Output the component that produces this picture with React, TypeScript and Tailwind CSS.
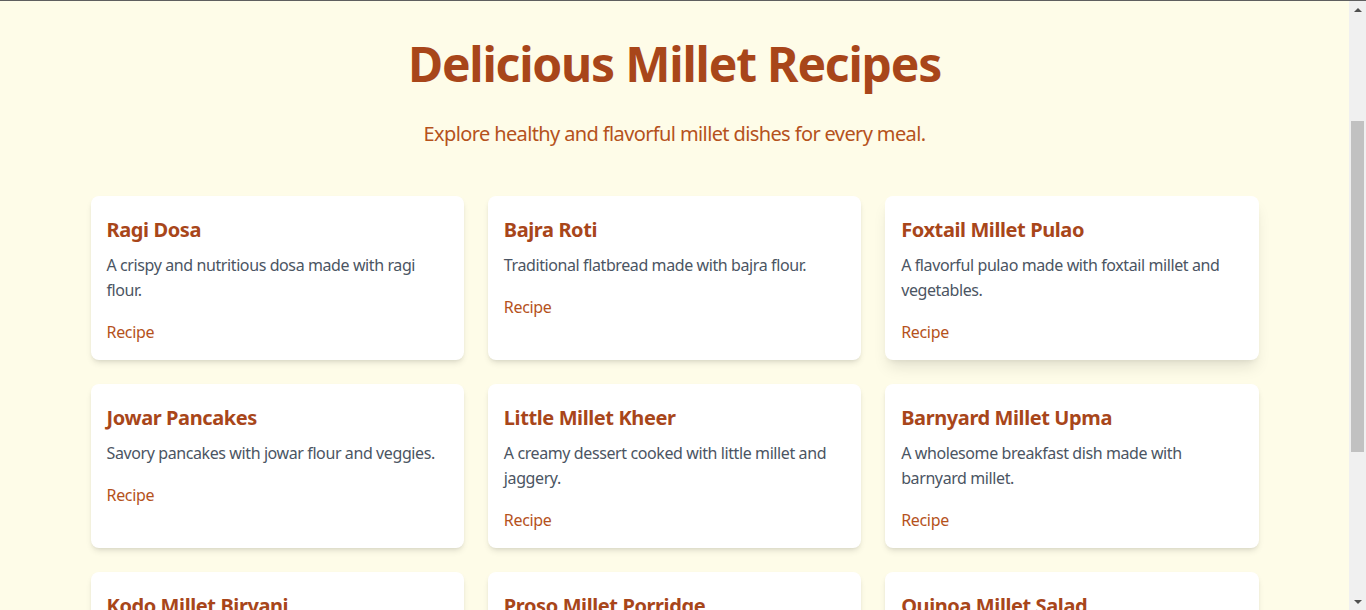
const recipes = [
  { name: 'Ragi Dosa', desc: 'A crispy and nutritious dosa made with ragi flour.' },
  { name: 'Bajra Roti', desc: 'Traditional flatbread made with bajra flour.' },
  { name: 'Foxtail Millet Pulao', desc: 'A flavorful pulao made with foxtail millet and vegetables.', active: true },
  { name: 'Jowar Pancakes', desc: 'Savory pancakes with jowar flour and veggies.' },
  { name: 'Little Millet Kheer', desc: 'A creamy dessert cooked with little millet and jaggery.' },
  { name: 'Barnyard Millet Upma', desc: 'A wholesome breakfast dish made with barnyard millet.' },
  { name: 'Kodo Millet Biryani', desc: 'A fragrant biryani made with kodo millet and spices.' },
  { name: 'Proso Millet Porridge', desc: 'A warm and comforting porridge made with proso millet.' },
  { name: 'Quinoa Millet Salad', desc: 'A fresh salad with quinoa, millet and crunchy vegetables.' },
];

const Scrollbar = () => (
  <div className="w-[17px] shrink-0 bg-[#f0f0f0] flex flex-col items-center">
    <div className="h-[17px] flex items-center justify-center">
      <div className="w-0 h-0 border-l-4 border-r-4 border-b-4 border-l-transparent border-r-transparent border-b-[#505050]" />
    </div>
    <div className="mt-[103px] h-[331px] w-[13px] bg-[#c1c1c1]" />
    <div className="flex-1" />
    <div className="h-[17px] flex items-center justify-center">
      <div className="w-0 h-0 border-l-4 border-r-4 border-t-4 border-l-transparent border-r-transparent border-t-[#505050]" />
    </div>
  </div>
);

export default function App() {
  return (
    <div className="h-screen flex border-t border-[#5f5f5f] font-['Noto_Sans',sans-serif]">
      <main className="flex-1 overflow-hidden bg-[#fefce8]">
        <div className="mx-auto max-w-[1168px] pt-[39px] pb-12">
          {/* Header */}
          <header className="text-center mb-12">
            <h1 className="text-5xl leading-none font-bold text-[#a8461a] tracking-[-0.025em]">Delicious Millet Recipes</h1>
            <p className="mt-8 text-xl leading-7 text-[#b5521c] tracking-[-0.031em]">
              Explore healthy and flavorful millet dishes for every meal.
            </p>
          </header>

          {/* Recipe cards */}
          <div className="grid grid-cols-3 gap-6">
            {recipes.map((r) => (
              <div
                key={r.name}
                className={`bg-white rounded-lg px-4 pt-5 pb-4 ${r.active ? 'shadow-lg' : 'shadow-md'}`}
              >
                <h2 className="text-xl leading-7 font-bold text-[#a8461a] tracking-[-0.02em]">{r.name}</h2>
                <p className="mt-[9px] text-base leading-[25px] text-[#4b5563] tracking-[-0.025em]">{r.desc}</p>
                <a href="#" className="block mt-[17px] text-base leading-6 text-[#b5521c] tracking-[-0.02em]">
                  Recipe
                </a>
              </div>
            ))}
          </div>
        </div>
      </main>
      <Scrollbar />
    </div>
  );
}
